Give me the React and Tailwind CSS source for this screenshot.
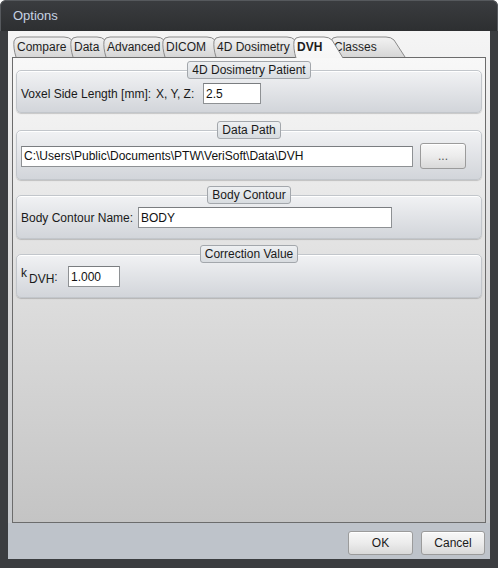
import React from 'react'

const TABS = [
  { label: 'Compare', w: 57 },
  { label: 'Data', w: 33 },
  { label: 'Advanced', w: 59 },
  { label: 'DICOM', w: 51 },
  { label: '4D Dosimetry', w: 80 },
  { label: 'DVH', w: 37, selected: true },
  { label: 'Classes', w: 62 },
]

const SLANT = 14

const Tab = ({ label, w, selected, index }) => {
  const b = w + SLANT
  const h = selected ? 22 : 21
  const edge = `M3,${h} C1,${h - 6} 0.5,9 1,5 Q2,1 7,1 L${b - 20},1 Q${b - 15},1 ${b - 12},4 L${b - 1},${h}`
  const gid = `tabfill${index}`
  return (
    <div
      className="relative h-[22px] flex items-start pt-[4px] pl-[4px]"
      style={{ width: b, marginRight: -SLANT, zIndex: selected ? 20 : index + 1 }}
    >
      <svg className="absolute left-0 top-0" width={b} height={h} viewBox={`0 0 ${b} ${h}`}>
        <defs>
          <linearGradient id={gid} x1="0" y1="0" x2="0" y2="1">
            <stop offset="0" stopColor={selected ? '#fbfbfb' : '#f3f3f3'} />
            <stop offset="1" stopColor={selected ? '#f6f6f6' : '#d6d6d6'} />
          </linearGradient>
        </defs>
        <path d={edge + ' Z'} fill={`url(#${gid})`} />
        <path d={edge} fill="none" stroke="#8a8a8a" strokeWidth="1" />
      </svg>
      <span className={`relative text-[12px] leading-[14px] text-[#1e1e1e] ${selected ? 'font-bold' : ''}`}>{label}</span>
    </div>
  )
}

const Group = ({ title, bodyClass, children }) => (
  <div className="flex flex-col">
    <div className="relative z-10 -mb-[9px] self-center h-[18px] px-[4px] flex items-center rounded-[3px] border border-[#a3a7ac] bg-gradient-to-b from-[#eef0f2] to-[#d8dce0] text-[12px] text-[#1a1a1a]">
      {title}
    </div>
    <div className={`rounded-[5px] border border-[#c2c6cb] bg-gradient-to-b from-[#f1f2f4] to-[#d2d5da] shadow-[inset_0_1px_0_#ffffff,0_1px_1px_rgba(0,0,0,0.18)] px-[4px] flex items-center ${bodyClass}`}>
      {children}
    </div>
  </div>
)

const TextBox = ({ value, className }) => (
  <div className={`h-[21px] bg-white border border-[#8e9194] border-t-[#7a7d80] flex items-center px-[2px] text-[12px] text-[#111] ${className}`}>
    {value}
  </div>
)

const Btn = ({ children, className }) => (
  <div className={`flex items-center justify-center rounded-[3px] border border-[#9b9b9b] bg-gradient-to-b from-[#f8f8f8] via-[#ececec] to-[#d9d9d9] shadow-[inset_0_1px_0_#ffffff] text-[12px] text-[#1a1a1a] ${className}`}>
    {children}
  </div>
)

export default function App() {
  return (
    <div className="w-[498px] h-[568px] flex flex-col bg-[#3b3d40] rounded-t-[6px] overflow-hidden select-none" style={{ fontFamily: '"Liberation Sans", Arial, sans-serif' }}>
      {/* title bar */}
      <div className="h-[31px] shrink-0 flex items-center pl-[12px] bg-gradient-to-b from-[#3a3c3f] to-[#2d2f31] border-t border-x border-[#56595d] rounded-t-[6px]">
        <span className="text-[13px] text-[#c6d2e2]">Options</span>
      </div>

      {/* client */}
      <div className="flex-1 mx-[8px] mb-[9px] flex flex-col">
        <div className="flex-1 flex flex-col px-[4px] pt-[5px] bg-gradient-to-b from-[#f5f5f5] via-[#d9d9da] to-[#c3c6ca]">
          {/* tabs */}
          <div className="relative z-10 flex pl-[1px] -mb-[1px] h-[22px]">
            {TABS.map((t, i) => <Tab key={t.label} {...t} index={i} />)}
          </div>

          {/* tab page */}
          <div className="h-[466px] border border-[#6c6c6c] bg-gradient-to-b from-[#f8f8f8] to-[#c4c4c4] px-[3px] pt-[3px] flex flex-col">
            <Group title="4D Dosimetry Patient" bodyClass="pt-[12px] pb-[8px]">
              <div className="w-[182px] flex text-[12px] text-[#1a1a1a]">
                <span className="w-[135px]">Voxel Side Length [mm]:</span>
                <span>X, Y, Z:</span>
              </div>
              <TextBox value="2.5" className="w-[58px]" />
            </Group>

            <div className="mt-[8px]">
              <Group title="Data Path" bodyClass="pt-[12px] pb-[10px]">
                <TextBox value="C:\Users\Public\Documents\PTW\VeriSoft\Data\DVH" className="w-[392px]" />
                <Btn className="ml-[7px] w-[46px] h-[26px] text-[10px] text-[#555]">...</Btn>
              </Group>
            </div>

            <div className="mt-[6px]">
              <Group title="Body Contour" bodyClass="pt-[11px] pb-[10px]">
                <span className="w-[117px] text-[12px] text-[#1a1a1a]">Body Contour Name:</span>
                <TextBox value="BODY" className="w-[254px]" />
              </Group>
            </div>

            <div className="mt-[6px]">
              <Group title="Correction Value" bodyClass="pt-[11px] pb-[10px]">
                <span className="w-[47px] text-[12px] text-[#1a1a1a] flex items-start h-[21px]">
                  <span className="leading-[12px] mt-[1px]">k</span>
                  <span className="leading-[12px] mt-[7px] ml-[2px]">DVH</span>
                  <span className="leading-[12px] mt-[5px]">:</span>
                </span>
                <TextBox value="1.000" className="w-[52px]" />
              </Group>
            </div>
          </div>
          <div className="h-[36px] -mx-[4px] bg-[#bec3ca] flex justify-end items-start pt-[8px] pr-[5px] gap-[8px]">
            <Btn className="w-[65px] h-[24px]">OK</Btn>
            <Btn className="w-[64px] h-[24px]">Cancel</Btn>
          </div>
        </div>
      </div>
    </div>
  )
}
